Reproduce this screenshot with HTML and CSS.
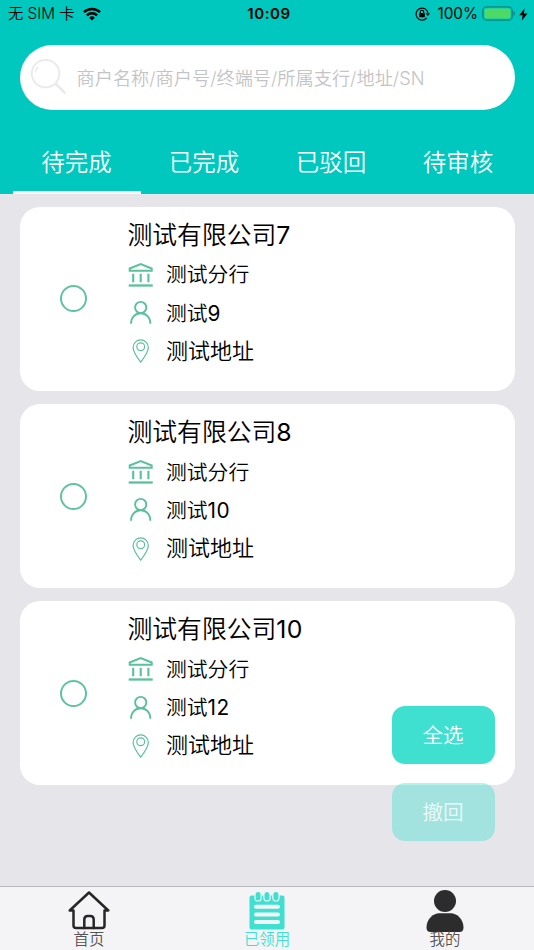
FILE: index.html
```
<!DOCTYPE html>
<html lang="zh-CN">
<head>
<meta charset="utf-8">
<title>已领用</title>
<link rel="stylesheet" href="styles.css">
</head>
<body>
<svg class="defs" width="0" height="0" aria-hidden="true">
  <symbol id="bank" viewBox="0 0 26 26"><path d="M1.700 8.800V6.500L12.700 2l11 4.500v2.300z" fill="none" stroke="currentColor" stroke-width="2"/><path d="M5.200 11.800V20.200M12.700 11.800V20.200M20.400 11.800V20.200" stroke="currentColor" stroke-width="2.100"/><path d="M.7 23.500h24" stroke="currentColor" stroke-width="2.300"/></symbol>
  <symbol id="person" viewBox="0 0 26 26"><g fill="none" stroke="currentColor" stroke-width="1.900"><circle cx="12.700" cy="7.500" r="5.600"/><path d="M3 23.700c0-6.200 4.200-10.400 9.700-10.400s9.700 4.200 9.700 10.400"/></g></symbol>
  <symbol id="pin" viewBox="0 0 26 26"><g fill="none" stroke="currentColor" stroke-width="1.200"><path d="M12.700 24.200C10.200 20.800 5.100 14.500 5.100 9.500a7.600 7.600 0 0 1 15.200 0c0 5-5.100 11.300-7.600 14.700z"/><circle cx="12.700" cy="8.800" r="3.900"/></g></symbol>
</svg>
<div class="screen">
  <header class="header">
    <div class="status">
      <div class="status-left"><span>无 SIM 卡</span>
        <svg width="18" height="14" viewBox="0 0 18 14"><g fill="none" stroke="#000" stroke-width="2.500"><path d="M.9 5.200a11.600 11.600 0 0 1 16.200 0"/><path d="M3.900 8.400a7.200 7.200 0 0 1 10.200 0"/></g><path d="M9 13.600 6.100 10.700a4.100 4.100 0 0 1 5.800 0z"/></svg>
      </div>
      <div class="time">10:09</div>
      <div class="status-right">
        <svg class="lock" width="16" height="14" viewBox="0 0 16 14"><path d="M11.600 11A6 6 0 1 1 12.900 6" fill="none" stroke="#000" stroke-width="1.200"/><path d="M10.600 6.200h4.600l-2.300 2.900z"/><rect x="4.200" y="6.100" width="5.600" height="4.200" rx=".5"/><path d="M5.300 6.500V5a1.700 1.700 0 0 1 3.400 0v1.500" fill="none" stroke="#000" stroke-width="1.100"/></svg>
        <span class="percent">100%</span>
        <svg class="battery" width="34" height="16" viewBox="0 0 34 16"><rect x=".8" y=".8" width="29.400" height="13.400" rx="3.800" fill="none" stroke="#078583" stroke-width="1.300"/><rect x="2.500" y="2.500" width="26" height="10" rx="2" fill="#4cd964"/><path d="M31.500 5.300c2 .5 2 4 0 4.500z" fill="#078583"/></svg>
        <svg width="9" height="13" viewBox="0 0 9 13"><path d="M5.600.2.3 7.200h3.300L2.800 12.700 8.500 5.400H4.900z"/></svg>
      </div>
    </div>
    <div class="search">
      <svg width="38" height="38" viewBox="0 0 38 38" fill="none" stroke="#e9e9e9"><circle cx="15.600" cy="15.600" r="13.800" stroke-width="1.800"/><path d="M5.400 14.500q.2-3.500 2.700-5.500" stroke-width="1.600"/><path d="m25.600 25.600 9.700 9.700" stroke-width="2.500"/></svg>
      <span>商户名称/商户号/终端号/所属支行/地址/SN</span>
    </div>
    <nav class="tabs">
      <div class="tab active">待完成</div><div class="tab">已完成</div><div class="tab">已驳回</div><div class="tab">待审核</div>
    </nav>
  </header>
  <main class="list">
    <article class="card">
      <div class="pick"><i class="radio"></i></div>
      <div class="info">
        <h2>测试有限公司<span class="num">7</span></h2>
        <div class="row"><svg><use href="#bank"/></svg><span>测试分行</span></div>
        <div class="row"><svg><use href="#person"/></svg><span>测试<span class="num">9</span></span></div>
        <div class="row address"><svg><use href="#pin"/></svg><span>测试地址</span></div>
      </div>
    </article>
    <article class="card">
      <div class="pick"><i class="radio"></i></div>
      <div class="info">
        <h2>测试有限公司<span class="num">8</span></h2>
        <div class="row"><svg><use href="#bank"/></svg><span>测试分行</span></div>
        <div class="row"><svg><use href="#person"/></svg><span>测试<span class="num">10</span></span></div>
        <div class="row address"><svg><use href="#pin"/></svg><span>测试地址</span></div>
      </div>
    </article>
    <article class="card">
      <div class="pick"><i class="radio"></i></div>
      <div class="info">
        <h2>测试有限公司<span class="num">10</span></h2>
        <div class="row"><svg><use href="#bank"/></svg><span>测试分行</span></div>
        <div class="row"><svg><use href="#person"/></svg><span>测试<span class="num">12</span></span></div>
        <div class="row address"><svg><use href="#pin"/></svg><span>测试地址</span></div>
      </div>
    </article>
  </main>
  <div class="actions">
    <div class="action">全选</div>
    <div class="action disabled">撤回</div>
  </div>
  <footer class="tabbar">
    <div class="item">
      <svg width="44" height="40" viewBox="0 0 44 40" fill="none" stroke="#262626" stroke-width="2.500" stroke-linejoin="round" stroke-linecap="round"><path d="M6.500 20.500H2.700L22 2.500l19.300 18h-3.800v15q0 2.500-2.500 2.500H9q-2.500 0-2.500-2.500z"/><path d="M17.300 38V29.500q0-3.500 3.500-3.500h2.400q3.500 0 3.500 3.500V38"/></svg>
      <span>首页</span>
    </div>
    <div class="item current">
      <svg width="44" height="40" viewBox="0 0 44 40"><rect x="4.500" y="5.500" width="35" height="34" rx="2" fill="#40e0d0"/><g fill="#40e0d0" stroke="#f4f4f6" stroke-width="1.200"><rect x="10" y="1.500" width="6.200" height="9.500" rx="3.100"/><rect x="18.900" y="1.500" width="6.200" height="9.500" rx="3.100"/><rect x="27.800" y="1.500" width="6.200" height="9.500" rx="3.100"/></g><path d="M11 16.700h22M11 24.400h22M11 32.100h22" stroke="#f4f4f6" stroke-width="4" stroke-linecap="round"/></svg>
      <span>已领用</span>
    </div>
    <div class="item">
      <svg width="44" height="40" viewBox="0 0 44 40" fill="#2c2c2c"><circle cx="22" cy="11" r="11"/><path d="M3.500 37.500C3.500 28.500 11 23.300 16 23.300h12c5 0 12.500 5.200 12.500 14.200 0 3-1.500 4.500-4 4.500h-29c-2.500 0-4-1.500-4-4.500z"/></svg>
      <span>我的</span>
    </div>
  </footer>
</div>
</body>
</html>
```
FILE: styles.css
```
* { box-sizing: border-box; }
body {
  margin: 0;
  font-family: Inter, "Noto Sans CJK SC", sans-serif;
  font-weight: 350;
  color: #000;
}
svg { display: block; flex: none; overflow: visible; }
.defs { position: absolute; }
.screen {
  position: relative;
  width: 534px;
  height: 950px;
  overflow: hidden;
  display: flex;
  flex-direction: column;
  background: #e5e5ea;
  white-space: nowrap;
}
.header { height: 193.5px; flex: none; background: #00c8be; }
.status {
  height: 28px;
  display: grid;
  grid-template-columns: 1fr auto 1fr;
  align-items: center;
  padding: 0 6px 0 8px;
  font-size: 15.3px;
  line-height: 28px;
}
.status-left { display: flex; align-items: center; gap: 8px; }
.time { font-weight: 600; font-size: 15px; letter-spacing: .6px; padding-left: 2px; }
.status-right { display: flex; align-items: center; justify-content: flex-end; }
.percent { margin: 0 4px 0 6px; font-weight: 400; }
.battery { margin-right: 3px; }
.search {
  height: 64.5px;
  margin: 17px 19.5px 0;
  padding-left: 10px;
  display: flex;
  align-items: center;
  gap: 9px;
  border-radius: 33px;
  background: #fff;
  color: #c4c4c6;
  font-size: 18.2px;
}
.tabs { display: flex; height: 84px; padding: 20px 13px 0; }
.tab {
  width: 127px;
  flex: none;
  padding-right: 1px;
  text-align: center;
  color: #fff;
  font-size: 23.5px;
  line-height: 65px;
  height: 64px;
}
.tab.active { border-bottom: 3px solid #fff; width: 128px; }
.list {
  flex: 1;
  display: flex;
  flex-direction: column;
  gap: 13.3px;
  padding: 13.3px 19.5px 0;
}
.card {
  height: 184px;
  flex: none;
  display: flex;
  background: #fff;
  border-radius: 20px;
}
.pick { width: 108px; display: flex; align-items: center; justify-content: center; }
.radio { width: 27px; height: 27px; border: 2px solid #60c3a0; border-radius: 50%; }
.info { padding-top: 10px; }
h2 {
  margin: 0 0 3px;
  font-size: 24.8px;
  font-weight: 350;
  line-height: 36px;
  height: 36px;
}
.num { font-weight: 400; letter-spacing: .4px; }
.row { display: flex; align-items: center; gap: 12.5px; height: 38.2px; font-size: 20.8px; line-height: 41px; }
.row svg { width: 26px; height: 26px; color: #5bc09c; }
.address { font-size: 22px; line-height: 39px; }
.actions {
  position: absolute;
  left: 392px;
  top: 706px;
  display: flex;
  flex-direction: column;
  gap: 19px;
}
.action {
  width: 103px;
  height: 58px;
  padding-right: 1px;
  border-radius: 13px;
  background: #40e0d0;
  color: #fff;
  text-align: center;
  font-size: 20.6px;
  line-height: 60px;
}
.disabled { background: rgba(64, 224, 208, .4); color: rgba(255, 255, 255, .8); }
.tabbar {
  height: 64px;
  flex: none;
  display: grid;
  grid-template-columns: repeat(3, 1fr);
  border-top: 1px solid #b9b9bd;
  background: #f4f4f6;
}
.item { display: flex; flex-direction: column; align-items: center; padding-top: 3px; color: #555; }
.item span { position: relative; height: 20px; font-size: 15.4px; line-height: 20px; }
.item.current { color: #40e0d0; }
```
